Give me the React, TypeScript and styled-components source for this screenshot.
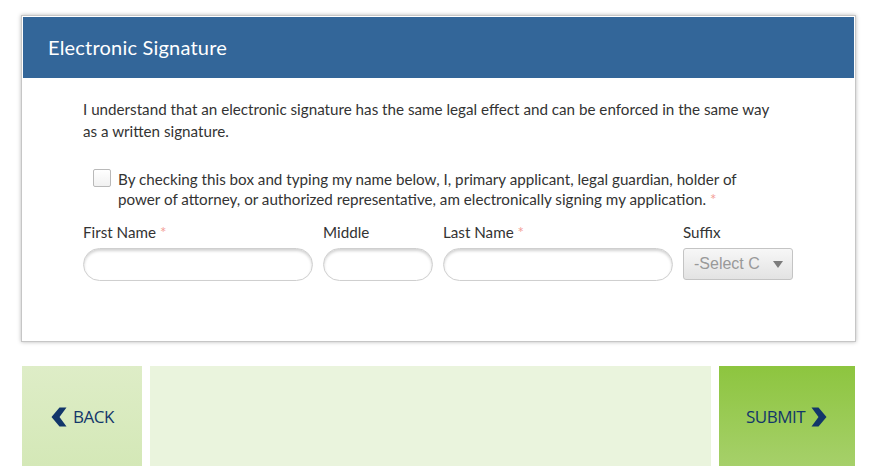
import React from "react";
import styled, { createGlobalStyle } from "styled-components";

const GlobalStyle = createGlobalStyle`
  html, body { margin: 0; padding: 0; background: #ffffff; }
  body { font-family: Lato, "Open Sans", sans-serif; color: #333; }
  * { box-sizing: border-box; }
`;

const Page = styled.div`
  width: 872px;
  height: 476px;
  padding: 15px 17px 0 21px;
  display: flex;
  flex-direction: column;
  gap: 24px;
`;

const Card = styled.section`
  width: 835px;
  border: 1px solid #c6c6c6;
  padding: 1px;
  background: #fff;
  box-shadow: 0 0 4px rgba(0, 0, 0, 0.28);
`;

const Header = styled.div`
  height: 61px;
  background: #336699;
  display: flex;
  align-items: center;
  padding-left: 25px;
  padding-bottom: 1px;
  color: #fff;
  font-size: 20px;
  font-weight: 400;
  letter-spacing: 0.2px;
`;

const Body = styled.div`
  padding: 20px 60px 59px 60px;
  display: flex;
  flex-direction: column;
`;

const Intro = styled.p`
  margin: 0;
  max-width: 690px;
  font-size: 15.2px;
  line-height: 22px;
  color: #333;
`;

const CheckRow = styled.label`
  margin-top: 27px;
  padding-left: 10px;
  display: flex;
  gap: 7px;
  align-items: flex-start;
`;

const Box = styled.span`
  flex: none;
  width: 18px;
  height: 18px;
  border: 1px solid #b9b9b9;
  border-radius: 2px;
  background: linear-gradient(#ffffff, #f1f1f1);
`;

const CheckText = styled.span`
  font-size: 15.2px;
  line-height: 20px;
  max-width: 650px;
  color: #333;
`;

const Req = styled.span`
  color: #f3a097;
`;

const Fields = styled.div`
  margin-top: 13px;
  display: grid;
  grid-template-columns: 230px 110px 230px 110px;
  column-gap: 10px;
`;

const Field = styled.div`
  display: flex;
  flex-direction: column;
  gap: 6px;
`;

const Label = styled.span`
  font-size: 15.2px;
  line-height: 20px;
  height: 20px;
  color: #333;
`;

const Input = styled.div`
  height: 33px;
  border: 1px solid #cfcfcf;
  border-radius: 17px;
  background: #fff;
  box-shadow: inset 0 2px 3px rgba(0, 0, 0, 0.18);
`;

const Select = styled.div`
  height: 32px;
  border: 1px solid #c4c4c4;
  border-radius: 3px;
  background: linear-gradient(#f7f7f7, #e3e3e3);
  display: flex;
  align-items: center;
  padding-left: 10px;
  font-family: "Liberation Sans", Arial, sans-serif;
  font-size: 16px;
  color: #999;
  overflow: hidden;
  white-space: nowrap;
`;

const SelectText = styled.span`
  width: 70px;
  overflow: hidden;
`;

const Caret = styled.span`
  margin-left: 9px;
  width: 0;
  height: 0;
  border-left: 5.5px solid transparent;
  border-right: 5.5px solid transparent;
  border-top: 7px solid #7c7c7c;
`;

const Footer = styled.div`
  margin-left: 1px;
  height: 100px;
  width: 833px;
  display: grid;
  grid-template-columns: 120px 1fr 136px;
  column-gap: 8px;
`;

const NavButton = styled.div<{ $primary?: boolean }>`
  display: flex;
  align-items: center;
  justify-content: center;
  gap: 6px;
  background: ${(p) =>
    p.$primary
      ? "linear-gradient(#8dc53f, #a6d06a)"
      : "linear-gradient(#deedc7, #d4e8b7)"};
  color: #12366a;
  font-family: "Open Sans", Lato, sans-serif;
  font-size: 17px;
  letter-spacing: -0.5px;
  text-transform: uppercase;
  padding-top: 1px;
`;

const Spacer = styled.div`
  background: #eaf4dd;
`;

const Chevron = ({ dir }: { dir: "left" | "right" }) => (
  <svg width="17" height="20" viewBox="0 0 17 20">
    {dir === "left" ? (
      <path d="M9.5 0.5 L16.5 0.5 L9.5 10 L16.5 19.5 L9.5 19.5 L1.5 10 Z" fill="#12366a" />
    ) : (
      <path d="M7.5 0.5 L0.5 0.5 L7.5 10 L0.5 19.5 L7.5 19.5 L15.5 10 Z" fill="#12366a" />
    )}
  </svg>
);

export default function App() {
  return (
    <>
      <GlobalStyle />
      <Page>
        <Card>
          <Header>Electronic Signature</Header>
          <Body>
            <Intro>
              I understand that an electronic signature has the same legal effect and can be
              enforced in the same way as a written signature.
            </Intro>
            <CheckRow>
              <Box />
              <CheckText>
                By checking this box and typing my name below, I, primary applicant, legal
                guardian, holder of power of attorney, or authorized representative, am
                electronically signing my application. <Req>*</Req>
              </CheckText>
            </CheckRow>
            <Fields>
              <Field>
                <Label>
                  First Name <Req>*</Req>
                </Label>
                <Input />
              </Field>
              <Field>
                <Label>Middle</Label>
                <Input />
              </Field>
              <Field>
                <Label>
                  Last Name <Req>*</Req>
                </Label>
                <Input />
              </Field>
              <Field>
                <Label>Suffix</Label>
                <Select>
                  <SelectText>-Select C</SelectText>
                  <Caret />
                </Select>
              </Field>
            </Fields>
          </Body>
        </Card>
        <Footer>
          <NavButton>
            <Chevron dir="left" />
            Back
          </NavButton>
          <Spacer />
          <NavButton $primary>
            Submit
            <Chevron dir="right" />
          </NavButton>
        </Footer>
      </Page>
    </>
  );
}
